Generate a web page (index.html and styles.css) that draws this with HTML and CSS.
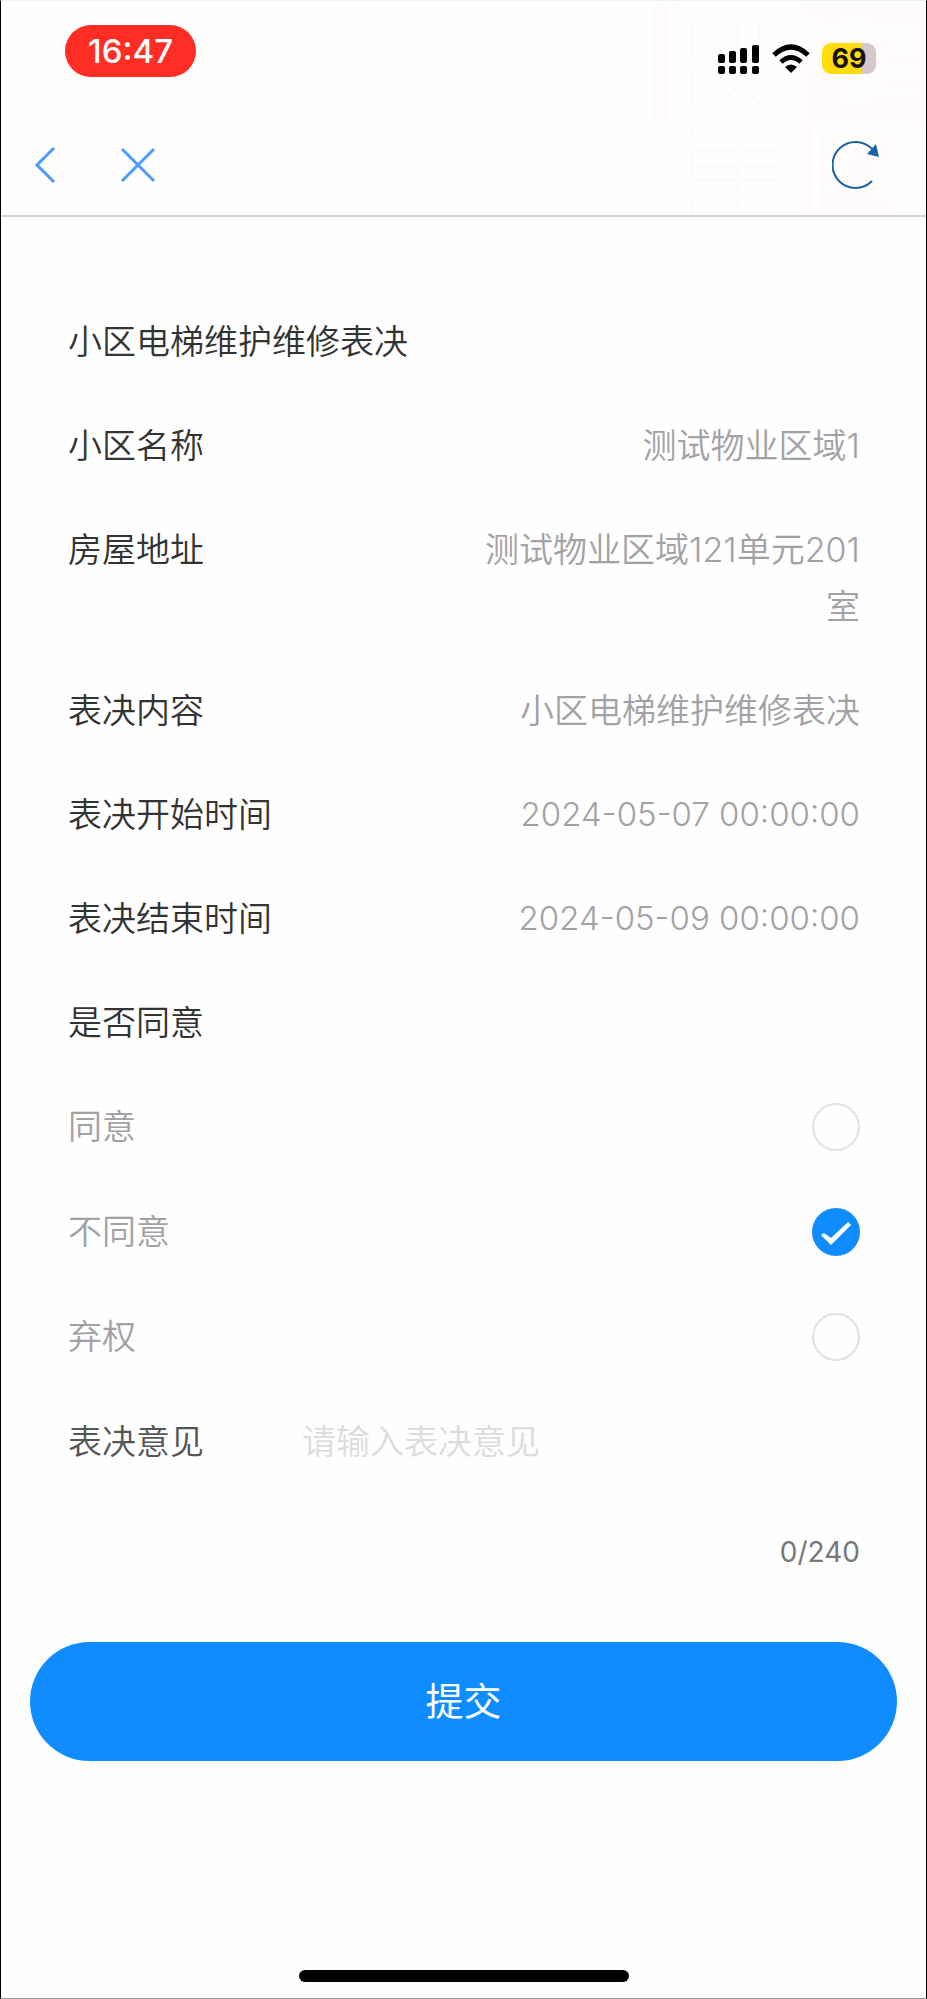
FILE: index.html
```
<!DOCTYPE html>
<html lang="zh-CN">
<head>
	<meta charset="utf-8">
	<meta name="viewport" content="width=device-width, initial-scale=1">
	<title>小区电梯维护维修表决</title>
	<link rel="stylesheet" href="styles.css">
</head>
<body>

<div class="page">

	<header class="header">
		<!-- faint seal pattern behind the status bar -->
		<svg class="seal" viewBox="0 0 274 215" aria-hidden="true">
			<path class="seal-fill" d="M0 3h16v122H0zM20 3h7v212h-7zM147 3h125v212H147zM16 195l4 20h-6z"/>
			<path class="seal-gap" d="M158 10h8v14h40V10h9v14h40V10h6v46h-8V34h-38v18h-9V34h-40v26h-8zM205 66h54v10h-43v10h43v10h-43v12h-11zM160 130q0-8 8-8h86q8 0 8 8v82h-8v-78h-86v78h-8zM176 140h60v8h-60zM176 164h24v6h-24zM176 184h24v6h-24zM222 212l10-56h8l14 56h-8l-9-28-7 28z"/>
			<path class="seal-line" d="M40 60V24q0-6 6-6h13q6 0 6 6v35M107 59V24q0-6 6-6h13q6 0 6 6v35M86 20v45M40 72v31q0 6 6 6h80q6 0 6-6V72M60 107l26-21 27 21M40 127v9h92v-9M86 127v88M46 151h80q6 0 6 6v17q0 6-6 6H46q-6 0-6-6v-17q0-6 6-6zM40 166h92M40 215v-14q0-6 6-6h80q6 0 6 6v14"/>
		</svg>

		<div class="status">
			<span class="time">16:47</span>
			<div class="status-icons">
				<svg width="42" height="30" viewBox="0 0 42 30" aria-hidden="true">
					<g fill="#000">
						<rect x="0" y="10" width="7" height="9" rx="2"/>
						<rect x="11" y="7" width="7" height="12" rx="2"/>
						<rect x="22" y="4" width="7" height="15" rx="2"/>
						<rect x="34" y="1" width="7" height="18" rx="2"/>
						<rect x="0" y="22" width="7" height="8" rx="2"/>
						<rect x="11" y="22" width="7" height="8" rx="2"/>
						<rect x="22" y="22" width="7" height="8" rx="2"/>
						<rect x="34" y="22" width="7" height="8" rx="2"/>
					</g>
				</svg>
				<svg width="38" height="30" viewBox="0 0 38 30" aria-hidden="true">
					<path d="M2 11Q19-5 36 11" fill="none" stroke="#000" stroke-width="5"/>
					<path d="M9 18Q19 9 29 18" fill="none" stroke="#000" stroke-width="5"/>
					<path d="M13 23Q19 18 25 23L19 29Z" fill="#000"/>
				</svg>
				<span class="battery">69</span>
			</div>
		</div>

		<nav class="nav">
			<button class="nav-btn" type="button" aria-label="返回">
				<svg width="24" height="40" viewBox="0 0 24 40"><path d="M21 3L4 20L21 37" fill="none" stroke="#4a9aff" stroke-width="3"/></svg>
			</button>
			<button class="nav-btn nav-close" type="button" aria-label="关闭">
				<svg width="36" height="40" viewBox="0 0 36 40"><path d="M2 4L34 36M34 4L2 36" fill="none" stroke="#4a9aff" stroke-width="3"/></svg>
			</button>
			<button class="nav-btn nav-reload" type="button" aria-label="刷新">
				<svg width="48" height="50" viewBox="0 0 48 50">
					<path d="M40 41A23 23 0 1 1 41 10" fill="none" stroke="#1763a6" stroke-width="2"/>
					<path d="M44 4L47 17L35 14Z" fill="#1763a6"/>
				</svg>
			</button>
		</nav>
	</header>

	<form class="form">
		<h1 class="title">小区电梯维护维修表决</h1>

		<dl class="info">
			<div class="row">
				<dt>小区名称</dt>
				<dd>测试物业区域1</dd>
			</div>
			<div class="row">
				<dt>房屋地址</dt>
				<dd>测试物业区域121单元201室</dd>
			</div>
			<div class="row">
				<dt>表决内容</dt>
				<dd>小区电梯维护维修表决</dd>
			</div>
			<div class="row">
				<dt>表决开始时间</dt>
				<dd class="date">2024-05-07 00:00:00</dd>
			</div>
			<div class="row">
				<dt>表决结束时间</dt>
				<dd class="date">2024-05-09 00:00:00</dd>
			</div>
		</dl>

		<fieldset class="vote">
			<legend class="title">是否同意</legend>
			<label class="option">
				同意
				<span class="radio">
					<input type="radio" name="vote" value="agree">
					<svg viewBox="0 0 48 48" aria-hidden="true"><path d="M9 27L12 25L19 30L36 14L39 17L19 37Z"/></svg>
				</span>
			</label>
			<label class="option">
				不同意
				<span class="radio">
					<input type="radio" name="vote" value="disagree" checked>
					<svg viewBox="0 0 48 48" aria-hidden="true"><path d="M9 27L12 25L19 30L36 14L39 17L19 37Z"/></svg>
				</span>
			</label>
			<label class="option">
				弃权
				<span class="radio">
					<input type="radio" name="vote" value="abstain">
					<svg viewBox="0 0 48 48" aria-hidden="true"><path d="M9 27L12 25L19 30L36 14L39 17L19 37Z"/></svg>
				</span>
			</label>
		</fieldset>

		<div class="opinion">
			<label for="opinion">表决意见</label>
			<input type="text" id="opinion" maxlength="240" placeholder="请输入表决意见">
		</div>
		<p class="count">0/240</p>

		<button class="submit" type="submit">提交</button>
	</form>

	<div class="home-bar"></div>

</div>

</body>
</html>
```
FILE: styles.css
```
* {
	box-sizing: border-box;
}

body {
	margin: 0;
	background-color: #fefefe;
	font-family: Inter, "Noto Sans CJK SC", sans-serif;
	font-size: 34px;
	line-height: 57px;
	color: #333;
}

button,
input {
	font: inherit;
}

.page {
	display: flex;
	flex-direction: column;
	min-height: 100vh;
	border: 1px solid #000;
	border-top-color: #f0f0f0;
	border-bottom-color: #999;
}

/* header */

.header {
	position: relative;
	border-bottom: 2px solid #d4d3d3;
}

.seal {
	position: absolute;
	top: 0;
	right: 0;
	width: 274px;
	height: 100%;
}

.seal-fill {
	fill: #fffbfb;
}

.seal-gap {
	fill: #fefefe;
}

.seal-line {
	fill: none;
	stroke: #fff8f8;
	stroke-width: 2;
}

.status {
	position: relative;
	display: flex;
	align-items: flex-start;
	justify-content: space-between;
	padding: 24px 50px 0 64px;
}

.time {
	padding: 0 23px;
	border-radius: 26px;
	background-color: #ff2d23;
	color: #fff;
	font-weight: 500;
	font-size: 33px;
	line-height: 52px;
}

.status-icons {
	display: flex;
	align-items: center;
	gap: 12px;
	padding-top: 18px;
}

.battery {
	width: 54px;
	border-radius: 9px;
	background: linear-gradient(to right, #ffdc0a 72%, #d6c8ca 72%);
	color: #111;
	font-weight: 700;
	font-size: 27px;
	line-height: 31px;
	text-align: center;
}

.nav {
	position: relative;
	display: flex;
	align-items: center;
	padding: 63px 46px 25px 32px;
}

.nav-btn {
	display: flex;
	padding: 0;
	border: 0;
	background: none;
}

.nav-close {
	margin-left: 63px;
}

.nav-reload {
	margin-left: auto;
}

/* form */

.form {
	padding: 72px 66px 0 67px;
}

.title {
	margin: 0;
	padding: 24px 0 23px;
	font-weight: 350;
	font-size: 34px;
}

.info {
	margin: 0;
}

.row {
	display: grid;
	grid-template-columns: 1fr 1fr;
	padding: 24px 0 23px;
	font-weight: 350;
}

.row dd {
	margin: 0;
	color: #a3a1a5;
	text-align: right;
}

.row .date {
	font-size: 33px;
}

.vote {
	margin: 0;
	padding: 0;
	border: 0;
}

.option {
	display: flex;
	align-items: center;
	justify-content: space-between;
	padding: 24px 0;
	color: #a3a1a5;
	font-weight: 350;
}

.radio {
	display: grid;
	width: 48px;
	height: 48px;
}

.radio input,
.radio svg {
	grid-area: 1 / 1;
	width: 100%;
	height: 100%;
	margin: 0;
}

.radio input {
	appearance: none;
	border: 2px solid #e2e0e4;
	border-radius: 50%;
}

.radio input:checked {
	border-color: #0f8cff;
	background-color: #0f8cff;
}

.radio svg {
	display: none;
	fill: #fff;
	pointer-events: none;
}

.radio input:checked + svg {
	display: block;
}

.opinion {
	display: flex;
	padding: 24px 0;
	font-weight: 350;
}

.opinion label {
	width: 234px;
	color: #555;
}

.opinion input {
	flex: 1;
	min-width: 0;
	height: 57px;
	padding: 0;
	border: 0;
	outline: 0;
	background: none;
}

.opinion input::placeholder {
	color: #dddbe0;
}

.count {
	margin: 0;
	padding: 30px 0 62px;
	color: #777;
	font-size: 28px;
	line-height: 56px;
	text-align: right;
}

/* wider than the rows above it */
.submit {
	display: block;
	width: calc(100% + 75px);
	height: 119px;
	margin: 0 -37px 0 -38px;
	border: 0;
	border-radius: 60px;
	background-color: #0f8cff;
	color: #fff;
	font-size: 38px;
}

.home-bar {
	width: 330px;
	height: 12px;
	margin: auto auto 16px;
	border-radius: 6px;
	background-color: #000;
}
```
